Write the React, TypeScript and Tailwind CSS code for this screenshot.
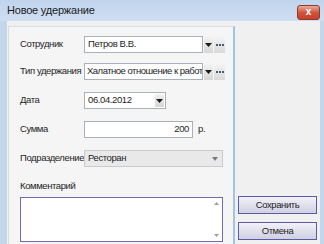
import React from 'react';

const font = { fontFamily: '"Liberation Sans", Arial, sans-serif' };

const Arrow = () => (
  <svg width="7" height="4" viewBox="0 0 7 4"><path d="M0 0h7L3.5 4z" fill="#1b1b1b" /></svg>
);

const DropBtn = () => (
  <div className="flex h-full w-[9px] items-center justify-center bg-gradient-to-b from-[#f2f2f2] to-[#d6d6d6]">
    <Arrow />
  </div>
);

const DotsBtn = () => (
  <div className="ml-[1px] flex h-[16px] w-[11px] items-center justify-center gap-[1px] bg-gradient-to-b from-[#f4f4f4] to-[#d8d8d8]">
    <span className="h-[2px] w-[2px] bg-[#4a5a7a]" />
    <span className="h-[2px] w-[2px] bg-[#4a5a7a]" />
    <span className="h-[2px] w-[2px] bg-[#4a5a7a]" />
  </div>
);

const Label: React.FC<{ text: string }> = ({ text }) => (
  <div className="w-[64px] shrink-0 whitespace-nowrap text-[9.5px] tracking-[-0.4px] text-[#1e1e1e]">{text}</div>
);

const txt = 'text-[9.5px] tracking-[-0.4px] text-[#1e1e1e]';

export default function App() {
  return (
    <div className="flex h-[244px] w-[324px] flex-col overflow-hidden bg-[#c3d6ec]" style={font}>
      {/* title bar */}
      <div className="flex h-[21px] shrink-0 items-center justify-between bg-gradient-to-b from-[#c0d4ed] to-[#cfdff2] pl-[7px] pr-[4px]">
        <span className="text-[11px] tracking-[-0.2px] text-[#1a1a1a]">Новое удержание</span>
        <div className="mt-[3px] flex h-[15px] w-[23px] items-center justify-center rounded-[3px] border border-[#8f3b2c] bg-gradient-to-b from-[#e9a99a] via-[#d0553e] to-[#c7402a]">
          <span className="text-[10px] font-bold leading-none text-white">x</span>
        </div>
      </div>

      <div className="ml-[7px] mr-[4px] flex flex-1 bg-[#f0f0f0] pl-[1px] pt-[5px]">
        {/* form panel */}
        <div className="flex w-[227px] flex-col border-l border-t border-r-2 border-l-[#d6dde4] border-t-[#d6dde4] border-r-[#a4c2e2] bg-[#f5f5f5] pl-[11px] pt-[9px]">
          <div className="flex h-[17px] items-center">
            <Label text="Сотрудник" />
            <div className={`flex h-[17px] w-[119px] items-center border border-[#a9b0b8] bg-white pl-[3px] ${txt}`}>Петров В.В.</div>
            <div className="ml-[1px] h-[16px]"><DropBtn /></div>
            <DotsBtn />
          </div>

          <div className="mt-[10px] flex h-[17px] items-center">
            <Label text="Тип удержания" />
            <div className="flex h-[17px] w-[119px] items-center overflow-hidden whitespace-nowrap border border-[#a9b0b8] bg-white pl-[2px] text-[9.5px] tracking-[-0.5px] text-[#1e1e1e]">Халатное отношение к работ</div>
            <div className="ml-[1px] h-[16px]"><DropBtn /></div>
            <DotsBtn />
          </div>

          <div className="mt-[12px] flex h-[17px] items-center">
            <Label text="Дата" />
            <div className={`flex h-[17px] w-[82px] items-center justify-between border border-[#a9b0b8] bg-white pl-[3px] pr-[1px] ${txt}`}>
              <span>06.04.2012</span>
              <div className="h-[13px]"><DropBtn /></div>
            </div>
          </div>

          <div className="mt-[12px] flex h-[17px] items-center">
            <Label text="Сумма" />
            <div className={`flex h-[17px] w-[109px] items-center justify-end border border-[#a9b0b8] bg-white pr-[3px] ${txt}`}>200</div>
            <span className={`ml-[5px] ${txt}`}>р.</span>
          </div>

          <div className="mt-[12px] flex h-[17px] items-center">
            <Label text="Подразделение" />
            <div className={`flex h-[17px] w-[139px] items-center justify-between border border-[#c8ccd0] bg-[#e9e9e9] pl-[3px] pr-[4px] ${txt}`}>
              <span>Ресторан</span>
              <svg width="6" height="4" viewBox="0 0 6 4"><path d="M0 0h6L3 4z" fill="#7a7a7a" /></svg>
            </div>
          </div>

          <div className={`mt-[14px] leading-none ${txt}`}>Комментарий</div>
          <div className="mt-[6px] flex h-[45px] w-[203px] justify-end border border-[#7468b4] bg-white pr-[3px]">
            <div className="flex flex-col justify-between py-[4px]">
              <svg width="5" height="3" viewBox="0 0 5 3"><path d="M0 3h5L2.5 0z" fill="#a0a0a0" /></svg>
              <svg width="5" height="3" viewBox="0 0 5 3"><path d="M0 0h5L2.5 3z" fill="#a0a0a0" /></svg>
            </div>
          </div>
        </div>

        {/* buttons */}
        <div className="flex flex-1 flex-col justify-end gap-[8px] pb-[4px] pl-[3px] pr-[1px]">
          <button className={`h-[18px] w-[79px] border border-[#5e5aa8] bg-gradient-to-b from-[#f2f1f8] to-[#cfd0e2] ${txt}`}>Сохранить</button>
          <button className={`h-[18px] w-[79px] border border-[#5e5aa8] bg-gradient-to-b from-[#f2f1f8] to-[#cfd0e2] ${txt}`}>Отмена</button>
        </div>
      </div>
    </div>
  );
}
